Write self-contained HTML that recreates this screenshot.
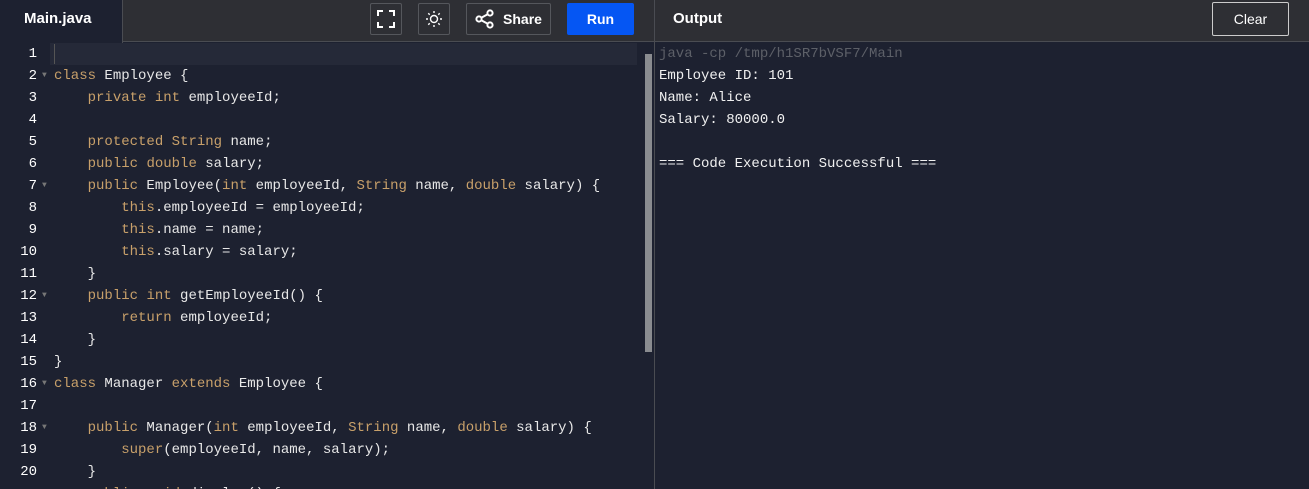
<!DOCTYPE html>
<html><head><style>
*{margin:0;padding:0;box-sizing:border-box}
html,body{width:1309px;height:489px;overflow:hidden}
body{background:#1d2130;font-family:"Liberation Sans",sans-serif;position:relative}
.hdr{position:absolute;left:0;top:0;width:1309px;height:42px;background:#2e2f34;border-bottom:1px solid #4a4c52}
.tab{position:absolute;left:0;top:0;width:123px;height:43px;background:#1d2130;border-right:1px solid #4a4c52;color:#fff;font-weight:bold;font-size:15px;line-height:38px;padding-left:24px}
.btn{position:absolute;top:3px;height:32px;border:1px solid #55575c;border-radius:2px;color:#fff;font-weight:bold;font-size:14px;display:flex;align-items:center;justify-content:center}
.run{background:#0556f3;border:none;border-radius:2px}
.div{position:absolute;left:654px;top:0;width:1px;height:489px;background:#4a4c52}
.code{position:absolute;left:0;top:43px;width:640px;height:446px;overflow:hidden;font-family:"Liberation Mono",monospace;font-size:14px;line-height:22px;color:#e8e8e8;white-space:pre}
.ln{position:absolute;left:0;width:37px;text-align:right;color:#fff}
.tx{position:absolute;left:54px}
.k{color:#c8a06a}
.f{position:absolute;left:42px;color:#777;font-size:8px}
.hl{position:absolute;left:50px;top:43px;width:587px;height:22px;background:#252938}
.out{position:absolute;left:659px;top:43px;font-family:"Liberation Mono",monospace;font-size:14px;line-height:22px;color:#f0f0f0;white-space:pre}
</style></head><body>
<div class="hdr"></div>
<div class="tab">Main.java</div>
<div class="btn" style="left:370px;width:32px"><svg width="18" height="18" viewBox="0 0 18 18" fill="none" stroke="#fff" stroke-width="2"><path d="M1 6V1h5M12 1h5v5M17 12v5h-5M6 17H1v-5"/></svg></div>
<div class="btn" style="left:418px;width:32px"><svg width="18" height="18" viewBox="0 0 18 18" fill="none" stroke="#fff" stroke-width="1.4"><circle cx="9" cy="9" r="3.5"/><path d="M9 1v2M9 15v2M1 9h2M15 9h2M3.3 3.3l1.4 1.4M13.3 13.3l1.4 1.4M3.3 14.7l1.4-1.4M13.3 4.7l1.4-1.4"/></svg></div>
<div class="btn" style="left:466px;width:85px"><svg width="20" height="20" viewBox="0 0 20 20" fill="none" stroke="#fff" stroke-width="2"><circle cx="4" cy="10" r="2.6"/><circle cx="15" cy="4" r="2.6"/><circle cx="15" cy="16" r="2.6"/><path d="M6.3 8.7l6.4-3.5M6.3 11.3l6.4 3.5"/></svg><span style="margin-left:8px">Share</span></div>
<div class="btn run" style="left:567px;width:67px">Run</div>
<div style="position:absolute;left:673px;top:0;line-height:38px;color:#fff;font-weight:bold;font-size:15px">Output</div>
<div class="btn" style="left:1212px;top:2px;width:77px;height:34px;border-color:#ccc;font-weight:normal">Clear</div>
<div class="div"></div>
<div class="hl"></div>
<div style="position:absolute;left:54px;top:44px;width:1px;height:20px;background:#555"></div>
<div style="position:absolute;left:645px;top:54px;width:7px;height:298px;background:#8a8c90"></div>
<div class="code">
<div class="ln" style="top:0">1</div>
<div class="ln" style="top:22px">2</div><div class="f" style="top:22px">▼</div><div class="tx" style="top:22px"><span class="k">class</span> Employee {</div>
<div class="ln" style="top:44px">3</div><div class="tx" style="top:44px">    <span class="k">private</span> <span class="k">int</span> employeeId;</div>
<div class="ln" style="top:66px">4</div>
<div class="ln" style="top:88px">5</div><div class="tx" style="top:88px">    <span class="k">protected</span> <span class="k">String</span> name;</div>
<div class="ln" style="top:110px">6</div><div class="tx" style="top:110px">    <span class="k">public</span> <span class="k">double</span> salary;</div>
<div class="ln" style="top:132px">7</div><div class="f" style="top:132px">▼</div><div class="tx" style="top:132px">    <span class="k">public</span> Employee(<span class="k">int</span> employeeId, <span class="k">String</span> name, <span class="k">double</span> salary) {</div>
<div class="ln" style="top:154px">8</div><div class="tx" style="top:154px">        <span class="k">this</span>.employeeId = employeeId;</div>
<div class="ln" style="top:176px">9</div><div class="tx" style="top:176px">        <span class="k">this</span>.name = name;</div>
<div class="ln" style="top:198px">10</div><div class="tx" style="top:198px">        <span class="k">this</span>.salary = salary;</div>
<div class="ln" style="top:220px">11</div><div class="tx" style="top:220px">    }</div>
<div class="ln" style="top:242px">12</div><div class="f" style="top:242px">▼</div><div class="tx" style="top:242px">    <span class="k">public</span> <span class="k">int</span> getEmployeeId() {</div>
<div class="ln" style="top:264px">13</div><div class="tx" style="top:264px">        <span class="k">return</span> employeeId;</div>
<div class="ln" style="top:286px">14</div><div class="tx" style="top:286px">    }</div>
<div class="ln" style="top:308px">15</div><div class="tx" style="top:308px">}</div>
<div class="ln" style="top:330px">16</div><div class="f" style="top:330px">▼</div><div class="tx" style="top:330px"><span class="k">class</span> Manager <span class="k">extends</span> Employee {</div>
<div class="ln" style="top:352px">17</div>
<div class="ln" style="top:374px">18</div><div class="f" style="top:374px">▼</div><div class="tx" style="top:374px">    <span class="k">public</span> Manager(<span class="k">int</span> employeeId, <span class="k">String</span> name, <span class="k">double</span> salary) {</div>
<div class="ln" style="top:396px">19</div><div class="tx" style="top:396px">        <span class="k">super</span>(employeeId, name, salary);</div>
<div class="ln" style="top:418px">20</div><div class="tx" style="top:418px">    }</div>
<div class="tx" style="top:440px">    <span class="k">public</span> <span class="k">void</span> display() {</div>
</div>
<div class="out"><span style="color:#5d6068">java -cp /tmp/h1SR7bVSF7/Main</span>
Employee ID: 101
Name: Alice
Salary: 80000.0

=== Code Execution Successful ===</div>
</body></html>
